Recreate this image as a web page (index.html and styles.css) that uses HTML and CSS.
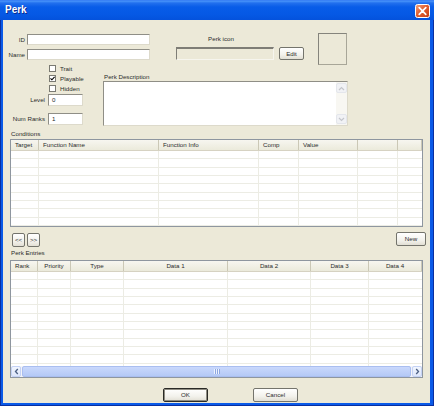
FILE: index.html
```html
<!DOCTYPE html>
<html>
<head>
<meta charset="utf-8">
<link rel="stylesheet" href="styles.css">
</head>
<body>
<div class="window">
  <div class="titlebar">
    <span class="title">Perk</span>
    <div class="close">
      <svg width="15" height="14" viewBox="0 0 15 14">
        <defs>
          <linearGradient id="cg" x1="0" y1="0" x2="1" y2="1">
            <stop offset="0" stop-color="#F2A684"/>
            <stop offset="0.45" stop-color="#E3602F"/>
            <stop offset="1" stop-color="#C63E14"/>
          </linearGradient>
        </defs>
        <rect x="0.5" y="0.5" width="14" height="13" rx="2" fill="url(#cg)" stroke="#FFFFFF" stroke-width="1"/>
        <path d="M4.2 3.6 L10.8 10.4 M10.8 3.6 L4.2 10.4" stroke="#FFFFFF" stroke-width="1.7" stroke-linecap="round"/>
      </svg>
    </div>
  </div>
  <div class="client">
    <div class="row-a">
      <div class="idname">
        <span class="lbl">ID</span><div class="tb w123"></div>
        <span class="lbl">Name</span><div class="tb w123"></div>
      </div>
      <div class="iconsel">
        <div class="iconlbl">Perk icon</div>
        <div class="iconfield-row">
          <div class="tb disabled w98 h13"></div>
          <div class="btn edit">Edit</div>
        </div>
      </div>
      <div class="iconbox"></div>
    </div>
    <div class="row-b">
      <div class="leftcol">
        <div class="checks">
          <div class="chk"><span class="cb"></span><span>Trait</span></div>
          <div class="chk"><span class="cb"><svg width="5" height="5" viewBox="0 0 5 5"><path d="M0.5 2.3 L1.9 3.8 L4.6 0.8" fill="none" stroke="#000" stroke-width="1.1"/></svg></span><span>Playable</span></div>
          <div class="chk"><span class="cb"></span><span>Hidden</span></div>
        </div>
        <div class="numfields">
          <span class="lbl">Level</span><div class="tb h12 val">0</div>
          <span class="lbl">Num Ranks</span><div class="tb h12 val">1</div>
        </div>
      </div>
      <div class="desc">
        <div class="desclbl">Perk Description</div>
        <div class="descbox">
          <div class="vscroll">
            <div class="sarrow"><svg width="7" height="5" viewBox="0 0 7 5"><path d="M1 4 L3.5 1.5 L6 4" fill="none" stroke="#C4C6CC" stroke-width="1.2"/></svg></div>
            <div class="sarrow"><svg width="7" height="5" viewBox="0 0 7 5"><path d="M1 1 L3.5 3.5 L6 1" fill="none" stroke="#C4C6CC" stroke-width="1.2"/></svg></div>
          </div>
        </div>
      </div>
    </div>

    <div class="grp-label">Conditions</div>
    <div class="list cond">
      <div class="lhead">
        <div class="hc" style="width:28px">Target</div>
        <div class="hc" style="width:120px">Function Name</div>
        <div class="hc" style="width:100px">Function Info</div>
        <div class="hc" style="width:40px">Comp</div>
        <div class="hc" style="width:59px">Value</div>
        <div class="hc" style="width:40px"></div>
        <div class="hc last"></div>
      </div>
      <div class="lbody">
        <div class="col" style="width:28px"></div>
        <div class="col" style="width:120px"></div>
        <div class="col" style="width:100px"></div>
        <div class="col" style="width:40px"></div>
        <div class="col" style="width:59px"></div>
        <div class="col" style="width:40px"></div>
        <div class="col last"></div>
      </div>
    </div>

    <div class="btnrow">
      <div class="btn nav">&lt;&lt;</div>
      <div class="btn nav second">&gt;&gt;</div>
      <div class="btn new">New</div>
    </div>

    <div class="grp-label entries-lbl">Perk Entries</div>
    <div class="list entries">
      <div class="lhead">
        <div class="hc" style="width:27px">Rank</div>
        <div class="hc ctr" style="width:33px">Priority</div>
        <div class="hc ctr" style="width:53px">Type</div>
        <div class="hc ctr" style="width:104px">Data 1</div>
        <div class="hc ctr" style="width:83px">Data 2</div>
        <div class="hc ctr" style="width:58px">Data 3</div>
        <div class="hc ctr last">Data 4</div>
      </div>
      <div class="lbody">
        <div class="col" style="width:27px"></div>
        <div class="col" style="width:33px"></div>
        <div class="col" style="width:53px"></div>
        <div class="col" style="width:104px"></div>
        <div class="col" style="width:83px"></div>
        <div class="col" style="width:58px"></div>
        <div class="col last"></div>
      </div>
      <div class="hscroll">
        <div class="harrow"><svg width="5" height="7" viewBox="0 0 5 7"><path d="M3.8 1 L1.5 3.5 L3.8 6" fill="none" stroke="#4D6185" stroke-width="1.3"/></svg></div>
        <div class="thumb"><span class="grip"></span></div>
        <div class="harrow"><svg width="5" height="7" viewBox="0 0 5 7"><path d="M1.2 1 L3.5 3.5 L1.2 6" fill="none" stroke="#4D6185" stroke-width="1.3"/></svg></div>
      </div>
    </div>

    <div class="okrow">
      <div class="btn ok default">OK</div>
      <div class="btn cancel">Cancel</div>
    </div>
  </div>
</div>
</body>
</html>
```
FILE: styles.css
```css
* { box-sizing: border-box; }

body {
  margin: 0;
  font-family: "Liberation Sans", Arial, sans-serif;
  font-size: 6.2px;
  color: #2B2B2B;
}

.window {
  width: 434px;
  height: 406px;
  display: flex;
  flex-direction: column;
  background: #0A5AE8;
  box-shadow: inset 1px 0 #0A2FA0, inset -1px 0 #0A2FA0, inset 0 -1px #0A2FA0;
}

.titlebar {
  height: 20px;
  display: flex;
  align-items: flex-start;
  padding: 0 4px 0 5px;
  background: linear-gradient(to bottom, #2A6FF0 0px, #4A95FA 1px, #2270EE 3px, #085CE8 7px, #0558E4 15px, #0452DC 20px);
}

.title {
  flex: 1;
  color: #fff;
  font-weight: bold;
  font-size: 10px;
  line-height: 20px;
  text-shadow: 1px 1px 0 #0B2A8C;
}

.close {
  width: 15px;
  height: 14px;
  margin-top: 4px;
  display: flex;
}

.client {
  flex: 1;
  margin: 0 4px 3px 3px;
  background: #ECE9D8;
  padding-top: 13px;
  display: flex;
  flex-direction: column;
}

.lbl {
  text-align: right;
  line-height: 8px;
  white-space: nowrap;
}

.tb {
  height: 11px;
  background: #fff;
  border: 1px solid;
  border-color: #8F8E86 #DDDACB #DDDACB #8F8E86;
}
.w123 { width: 123px; }
.w98 { width: 98px; }
.h13 { height: 13px; }
.h12 { height: 12px; }
.tb.disabled {
  background: #ECE9D8;
  border-color: #7E7D76 #F6F5EE #F6F5EE #7E7D76;
  border-top-width: 2px;
}
.tb.val {
  padding-left: 3px;
  line-height: 10px;
}

.btn {
  height: 14px;
  display: flex;
  align-items: center;
  justify-content: center;
  border: 1px solid #74746C;
  border-radius: 2px;
  background: linear-gradient(to bottom, #FFFFFF, #F3F2EC 60%, #E2DFD4);
  line-height: 12px;
  white-space: nowrap;
}

/* Row A */
.row-a {
  display: flex;
  align-items: flex-start;
  height: 30px;
}
.idname {
  display: grid;
  grid-template-columns: 22px 123px;
  column-gap: 2px;
  row-gap: 4px;
  align-items: center;
  margin-top: 1px;
}
.iconsel {
  margin-left: 26px;
  margin-top: 2px;
}
.iconlbl {
  width: 98px;
  padding-right: 8px;
  text-align: center;
  line-height: 8px;
}
.iconfield-row {
  display: flex;
  margin-top: 4px;
}
.btn.edit {
  width: 25px;
  height: 13px;
  margin-left: 5px;
}
.iconbox {
  margin-left: 14px;
  width: 29px;
  height: 32px;
  border: 1px solid;
  border-color: #85847C #A8A698 #A8A698 #85847C;
}

/* Row B */
.row-b {
  display: flex;
  height: 63px;
}
.leftcol { width: 100px; }
.checks { margin-left: 46px; }
.chk {
  height: 10px;
  display: flex;
  align-items: center;
  gap: 4px;
}
.cb {
  width: 7px;
  height: 7px;
  background: #fff;
  border: 1px solid #7A7A72;
  display: flex;
  align-items: center;
  justify-content: center;
}
.numfields {
  margin-top: 1px;
  display: grid;
  grid-template-columns: 42px 35px;
  column-gap: 3px;
  row-gap: 7px;
  align-items: center;
}
.desc { margin-top: 10px; }
.desclbl {
  line-height: 8px;
  padding-left: 1px;
}
.descbox {
  width: 245px;
  height: 45px;
  background: #fff;
  border: 1px solid;
  border-color: #8F8E86 #DDDACB #DDDACB #8F8E86;
  display: flex;
  justify-content: flex-end;
}
.vscroll {
  width: 11px;
  background: #F8F7F2;
  display: flex;
  flex-direction: column;
  justify-content: space-between;
  padding: 1px 0;
}
.sarrow {
  height: 10px;
  background: #F1F2F5;
  border: 1px solid #E4E6EC;
  border-radius: 2px;
  display: flex;
  align-items: center;
  justify-content: center;
}

/* Lists */
.grp-label {
  margin-top: 4px;
  padding-left: 8px;
  line-height: 8px;
}
.entries-lbl { margin-top: 2px; }

.list {
  margin-left: 7px;
  width: 413px;
  border: 1px solid #8E969F;
  background: #fff;
  display: flex;
  flex-direction: column;
}
.list.cond {
  margin-top: 1px;
  height: 88px;
}
.list.entries {
  margin-top: 3px;
  height: 118px;
}
.lhead {
  display: flex;
  height: 11px;
  background: linear-gradient(to bottom, #F7F6F0, #EBEADB);
  border-bottom: 1px solid #D6D2C2;
}
.hc {
  height: 100%;
  border-right: 1px solid #CBC8B6;
  padding-left: 4px;
  line-height: 10px;
  white-space: nowrap;
  overflow: hidden;
}
.hc.ctr {
  text-align: center;
  padding-left: 0;
}
.hc.last, .col.last { flex: 1; }
.lbody {
  flex: 1;
  display: flex;
  background-image: repeating-linear-gradient(to bottom, transparent 0, transparent 7.33px, #ECECE4 7.33px, #ECECE4 8.33px);
}
.col {
  border-right: 1px solid #ECECE4;
}
.col.last { border-right: none; }

.hscroll {
  height: 11px;
  display: flex;
  background: #F3F4F8;
}
.harrow {
  width: 10px;
  background: linear-gradient(to bottom, #F2F6FE, #DDE6FB);
  border: 1px solid #C4D2F5;
  border-radius: 2px;
  display: flex;
  align-items: center;
  justify-content: center;
}
.thumb {
  flex: 1;
  margin: 0 1px;
  background: linear-gradient(to bottom, #C9D8FC, #B4C9F6);
  border: 1px solid #A9BEF0;
  border-radius: 2px;
  display: flex;
  align-items: center;
  justify-content: center;
}
.grip {
  width: 6px;
  height: 5px;
  background: repeating-linear-gradient(to right, #EEF3FE 0, #EEF3FE 1px, #8CA6E0 1px, #8CA6E0 2px);
}

/* Button rows */
.btnrow {
  display: flex;
  height: 15px;
  margin-top: 5px;
  align-items: flex-start;
}
.btn.nav {
  width: 13px;
  margin-left: 9px;
  margin-top: 1px;
}
.btn.nav.second { margin-left: 2px; }
.btn.new {
  width: 30px;
  margin-left: auto;
  margin-right: 4px;
}

.okrow {
  display: flex;
  margin-top: 10px;
}
.btn.ok {
  width: 45px;
  margin-left: 160px;
}
.btn.default {
  border: 1px solid #2A2A26;
  box-shadow: inset 0 0 0 1px #8E8C82;
}
.btn.cancel {
  width: 45px;
  margin-left: 45px;
}
```
